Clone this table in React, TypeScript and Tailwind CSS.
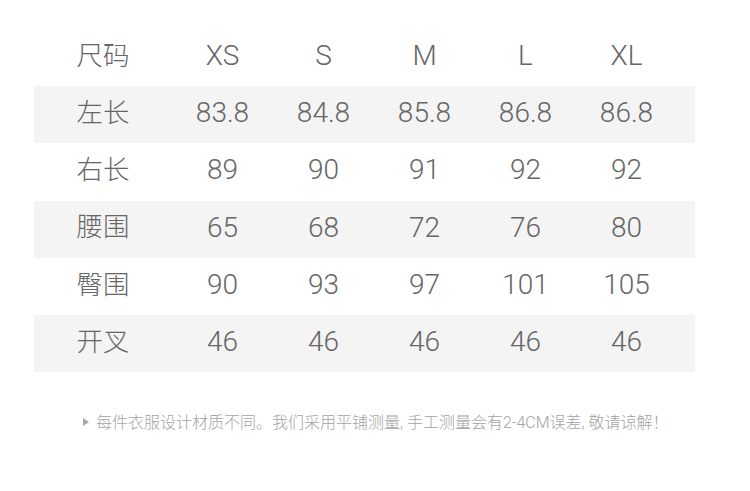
const sizes = ["XS", "S", "M", "L", "XL"];

const rows: { label: string; values: string[] }[] = [
  { label: "左长", values: ["83.8", "84.8", "85.8", "86.8", "86.8"] },
  { label: "右长", values: ["89", "90", "91", "92", "92"] },
  { label: "腰围", values: ["65", "68", "72", "76", "80"] },
  { label: "臀围", values: ["90", "93", "97", "101", "105"] },
  { label: "开叉", values: ["46", "46", "46", "46", "46"] },
];

const font = { fontFamily: 'Roboto, "Noto Sans CJK SC", "Noto Sans", sans-serif' };

function Row({ label, values, shaded }: { label: string; values: string[]; shaded?: boolean }) {
  return (
    <div
      className={`grid grid-cols-[138px_101px_101px_101px_101px_101px] items-center h-[57.2px] ${
        shaded ? "bg-[#f4f4f4]" : ""
      }`}
    >
      <span className="text-center text-[26.5px] leading-none pb-[3px]">{label}</span>
      {values.map((v, i) => (
        <span key={i} className="text-center text-[28px] leading-none pb-[3px]">
          {v}
        </span>
      ))}
    </div>
  );
}

export default function App() {
  return (
    <div className="w-[750px] h-[491px] bg-white text-[#666] font-light" style={font}>
      <div className="pt-[29px] px-[34px] w-[695px] box-content">
        <div className="w-[661px]">
          <Row label="尺码" values={sizes} />
          {rows.map((r, i) => (
            <Row key={r.label} label={r.label} values={r.values} shaded={i % 2 === 0} />
          ))}
        </div>
      </div>
      <div className="mt-[40px] pl-[82px] flex items-center gap-[6px] text-[16px] leading-[22px] text-[#a3a3a3]">
        <svg width="8" height="10" viewBox="0 0 8 10" className="mt-[-2px]">
          <path d="M1 1 L7 5 L1 9 Z" fill="#a8a8a8" />
        </svg>
        <span>每件衣服设计材质不同。我们采用平铺测量, 手工测量会有2-4CM误差, 敬请谅解！</span>
      </div>
    </div>
  );
}
